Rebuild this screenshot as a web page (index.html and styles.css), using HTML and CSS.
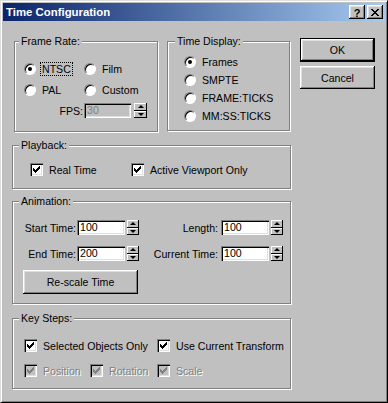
FILE: index.html
```html
<!DOCTYPE html>
<html lang="en">
<head>
    <meta charset="UTF-8">
    <title>Time Configuration</title>
    <link rel="stylesheet" href="styles.css">
</head>
<body>
    <div class="window">
        <div class="titlebar">
            <span class="title">Time Configuration</span>
            <span class="cap-btn help">?</span>
            <span class="cap-btn close">
                <svg width="8" height="7" viewBox="0 0 8 7"><path d="M0 0h2v1H0z M6 0h2v1H6z M1 1h2v1H1z M5 1h2v1H5z M2 2h4v1H2z M3 3h2v1H3z M2 4h4v1H2z M1 5h2v1H1z M5 5h2v1H5z M0 6h2v1H0z M6 6h2v1H6z" fill="#000"/></svg>
            </span>
        </div>

        <div class="client">
            <div class="main">
                <div class="top-row">
                    <div class="group frame-rate">
                        <span class="group-label">Frame Rate:</span>
                        <div class="radio-grid">
                            <div class="opt"><span class="radio on"></span><span class="focus">NTSC</span></div>
                            <div class="opt"><span class="radio"></span>Film</div>
                            <div class="opt"><span class="radio"></span>PAL</div>
                            <div class="opt"><span class="radio"></span>Custom</div>
                        </div>
                        <div class="fps-row">
                            <span class="fps-label">FPS:</span>
                            <span class="field fps disabled">30</span>
                            <span class="spinner big"><span class="up"></span><span class="down"></span></span>
                        </div>
                    </div>

                    <div class="group time-display">
                        <span class="group-label">Time Display:</span>
                        <div class="radio-list">
                            <div class="opt"><span class="radio on"></span>Frames</div>
                            <div class="opt"><span class="radio"></span>SMPTE</div>
                            <div class="opt"><span class="radio"></span>FRAME:TICKS</div>
                            <div class="opt"><span class="radio"></span>MM:SS:TICKS</div>
                        </div>
                    </div>
                </div>

                <div class="group playback">
                    <span class="group-label">Playback:</span>
                    <div class="check-row">
                        <div class="opt real-time"><span class="check"><svg width="13" height="13" viewBox="-2 -2 13 13"><path d="M1 3h1v3H1z M2 4h1v3H2z M3 5h1v3H3z M4 4h1v3H4z M5 3h1v3H5z M6 2h1v3H6z M7 1h1v3H7z"/></svg></span>Real Time</div>
                        <div class="opt"><span class="check"><svg width="13" height="13" viewBox="-2 -2 13 13"><path d="M1 3h1v3H1z M2 4h1v3H2z M3 5h1v3H3z M4 4h1v3H4z M5 3h1v3H5z M6 2h1v3H6z M7 1h1v3H7z"/></svg></span>Active Viewport Only</div>
                    </div>
                </div>

                <div class="group animation">
                    <span class="group-label">Animation:</span>
                    <div class="time-row">
                        <span class="tlabel first">Start Time:</span>
                        <span class="field">100</span>
                        <span class="spinner"><span class="up"></span><span class="down"></span></span>
                        <span class="tlabel second">Length:</span>
                        <span class="field">100</span>
                        <span class="spinner"><span class="up"></span><span class="down"></span></span>
                    </div>
                    <div class="time-row row-two">
                        <span class="tlabel first">End Time:</span>
                        <span class="field">200</span>
                        <span class="spinner"><span class="up"></span><span class="down"></span></span>
                        <span class="tlabel second">Current Time:</span>
                        <span class="field">100</span>
                        <span class="spinner"><span class="up"></span><span class="down"></span></span>
                    </div>
                    <button class="btn rescale">Re-scale Time</button>
                </div>

                <div class="group key-steps">
                    <span class="group-label">Key Steps:</span>
                    <div class="key-grid">
                        <div class="opt wide"><span class="check"><svg width="13" height="13" viewBox="-2 -2 13 13"><path d="M1 3h1v3H1z M2 4h1v3H2z M3 5h1v3H3z M4 4h1v3H4z M5 3h1v3H5z M6 2h1v3H6z M7 1h1v3H7z"/></svg></span>Selected Objects Only</div>
                        <div class="opt"><span class="check"><svg width="13" height="13" viewBox="-2 -2 13 13"><path d="M1 3h1v3H1z M2 4h1v3H2z M3 5h1v3H3z M4 4h1v3H4z M5 3h1v3H5z M6 2h1v3H6z M7 1h1v3H7z"/></svg></span>Use Current Transform</div>
                        <div class="opt disabled"><span class="check"><svg width="13" height="13" viewBox="-2 -2 13 13"><path d="M1 3h1v3H1z M2 4h1v3H2z M3 5h1v3H3z M4 4h1v3H4z M5 3h1v3H5z M6 2h1v3H6z M7 1h1v3H7z"/></svg></span>Position</div>
                        <div class="opt disabled"><span class="check"><svg width="13" height="13" viewBox="-2 -2 13 13"><path d="M1 3h1v3H1z M2 4h1v3H2z M3 5h1v3H3z M4 4h1v3H4z M5 3h1v3H5z M6 2h1v3H6z M7 1h1v3H7z"/></svg></span>Rotation</div>
                        <div class="opt disabled"><span class="check"><svg width="13" height="13" viewBox="-2 -2 13 13"><path d="M1 3h1v3H1z M2 4h1v3H2z M3 5h1v3H3z M4 4h1v3H4z M5 3h1v3H5z M6 2h1v3H6z M7 1h1v3H7z"/></svg></span>Scale</div>
                    </div>
                </div>
            </div>

            <div class="side">
                <button class="btn default">OK</button>
                <button class="btn cancel">Cancel</button>
            </div>
        </div>
    </div>
</body>
</html>
```

FILE: styles.css
```css
body {
    margin: 0;
    background: #c0c0c0;
    font-family: "Liberation Sans", Arial, sans-serif;
    font-size: 10.6px;
    color: #000;
}
.window {
    width: 388px;
    height: 403px;
    box-sizing: border-box;
    border: 1px solid;
    border-color: #dfdfdf #000 #000 #dfdfdf;
    box-shadow: inset 1px 1px #fff, inset -1px -1px #808080;
    padding: 2px;
    background: #c0c0c0;
}
.titlebar {
    display: flex;
    align-items: center;
    height: 18px;
    padding: 0 2px 0 3px;
    background: linear-gradient(to right, #0a246a, #a6caf0);
    color: #fff;
    font-weight: bold;
    font-size: 11.4px;
}
.title {
    flex: 1;
}
.cap-btn {
    display: flex;
    align-items: center;
    justify-content: center;
    width: 16px;
    height: 14px;
    box-sizing: border-box;
    background: #c0c0c0;
    color: #000;
    box-shadow: inset -1px -1px #000, inset 1px 1px #fff, inset -2px -2px #808080, inset 2px 2px #dfdfdf;
    font-size: 11px;
    line-height: 14px;
}
.cap-btn.help {
    margin-right: 2px;
    padding-top: 1px;
}

.client {
    display: flex;
    padding: 17px 0 0 9px;
}
.main {
    width: 279px;
    padding-top: 3px;
}
.side {
    display: flex;
    flex-direction: column;
    margin-left: 9px;
}

/* group boxes */
.group {
    box-sizing: border-box;
    border: 1px solid #808080;
    box-shadow: 1px 1px 0 #fff, inset 1px 1px 0 #fff;
}
.group-label {
    display: table;
    margin: -7px 0 0 6px;
    padding: 0 2px;
    background: #c0c0c0;
    line-height: 13px;
}
.top-row {
    display: flex;
    margin-left: 2px;
    gap: 9px;
}
.frame-rate {
    width: 144px;
    height: 91px;
}
.frame-rate .group-label {
    margin-left: 4px;
}
.time-display {
    width: 123px;
    height: 90px;
}
.time-display .group-label {
    margin-left: 7px;
}
.playback {
    margin-top: 13px;
    height: 44px;
}
.animation {
    margin-top: 12px;
    height: 103px;
}
.key-steps {
    margin-top: 14px;
    height: 71px;
}

/* radios and checks */
.opt {
    display: flex;
    align-items: center;
    gap: 6px;
    white-space: nowrap;
}
.radio {
    width: 12px;
    height: 12px;
    box-sizing: border-box;
    border-radius: 50%;
    background: #fff;
    border: 1px solid;
    border-color: #808080 #fff #fff #808080;
    box-shadow: inset 1px 1px 0 #000;
    display: flex;
    align-items: center;
    justify-content: center;
}
.radio.on::after {
    content: "";
    width: 4px;
    height: 4px;
    border-radius: 50%;
    background: #000;
}
.focus {
    outline: 1px dotted #000;
    padding: 0 1px;
    margin-left: -1px;
}
.radio-grid {
    display: grid;
    grid-template-columns: 60px auto;
    grid-auto-rows: 21px;
    margin: 10px 0 0 9px;
}
.radio-list {
    display: grid;
    grid-auto-rows: 18px;
    margin: 5px 0 0 16px;
}
.check {
    width: 13px;
    height: 13px;
    box-sizing: border-box;
    background: #fff;
    box-shadow: inset 1px 1px #808080, inset 2px 2px #000, inset -1px -1px #fff, inset -2px -2px #dfdfdf;
}
.check svg {
    display: block;
    fill: #000;
}
.opt.disabled {
    color: #808080;
    text-shadow: 1px 1px 0 #fff;
}
.opt.disabled .check {
    background: #c0c0c0;
}
.opt.disabled .check svg {
    fill: #808080;
}
.check-row {
    display: flex;
    height: 17px;
    margin: 9px 0 0 17px;
}
.real-time {
    width: 101px;
}
.key-grid {
    display: grid;
    grid-template-columns: 66px 67px auto;
    grid-auto-rows: 17px;
    row-gap: 8px;
    margin: 12px 0 0 11px;
}
.key-grid .wide {
    grid-column: span 2;
}

/* edit fields and spinners */
.field {
    width: 48px;
    height: 15px;
    box-sizing: border-box;
    padding: 0 3px;
    background: #fff;
    line-height: 15px;
    box-shadow: inset 1px 1px #808080, inset 2px 2px #000, inset -1px -1px #fff, inset -2px -2px #dfdfdf;
}
.field.disabled {
    background: #c0c0c0;
    color: #808080;
}
.field.fps {
    width: 47px;
}
.spinner {
    display: flex;
    flex-direction: column;
    width: 12px;
    height: 15px;
    margin-left: 2px;
}
.spinner.big {
    width: 13px;
    margin-left: 3px;
}
.spinner span {
    flex: 1;
    display: flex;
    align-items: center;
    justify-content: center;
    background: #c0c0c0;
    box-shadow: inset -1px -1px #000, inset 1px 1px #fff;
}
.spinner .up::after {
    content: "";
    border-left: 3px solid transparent;
    border-right: 3px solid transparent;
    border-bottom: 3px solid #000;
}
.spinner .down::after {
    content: "";
    border-left: 3px solid transparent;
    border-right: 3px solid transparent;
    border-top: 3px solid #000;
}
.fps-row {
    display: flex;
    align-items: center;
    justify-content: flex-end;
    height: 15px;
    margin-top: 3px;
    padding-right: 10px;
}
.fps-label {
    margin-right: 1px;
}
.time-row {
    display: flex;
    align-items: center;
    height: 15px;
    margin-top: 12px;
}
.time-row.row-two {
    margin-top: 11px;
}
.tlabel {
    text-align: right;
    padding-right: 1px;
}
.tlabel.first {
    width: 63px;
}
.tlabel.second {
    width: 79px;
    padding-right: 3px;
}

/* push buttons */
.btn {
    width: 75px;
    height: 23px;
    box-sizing: border-box;
    padding: 0;
    border: none;
    background: #c0c0c0;
    font: inherit;
    color: #000;
    box-shadow: inset -1px -1px #000, inset 1px 1px #fff, inset -2px -2px #808080, inset 2px 2px #dfdfdf;
}
.btn.default {
    height: 24px;
    border: 1px solid #000;
}
.btn.cancel {
    margin-top: 4px;
}
.btn.rescale {
    display: block;
    width: 115px;
    height: 24px;
    margin: 9px 0 0 10px;
}
```
